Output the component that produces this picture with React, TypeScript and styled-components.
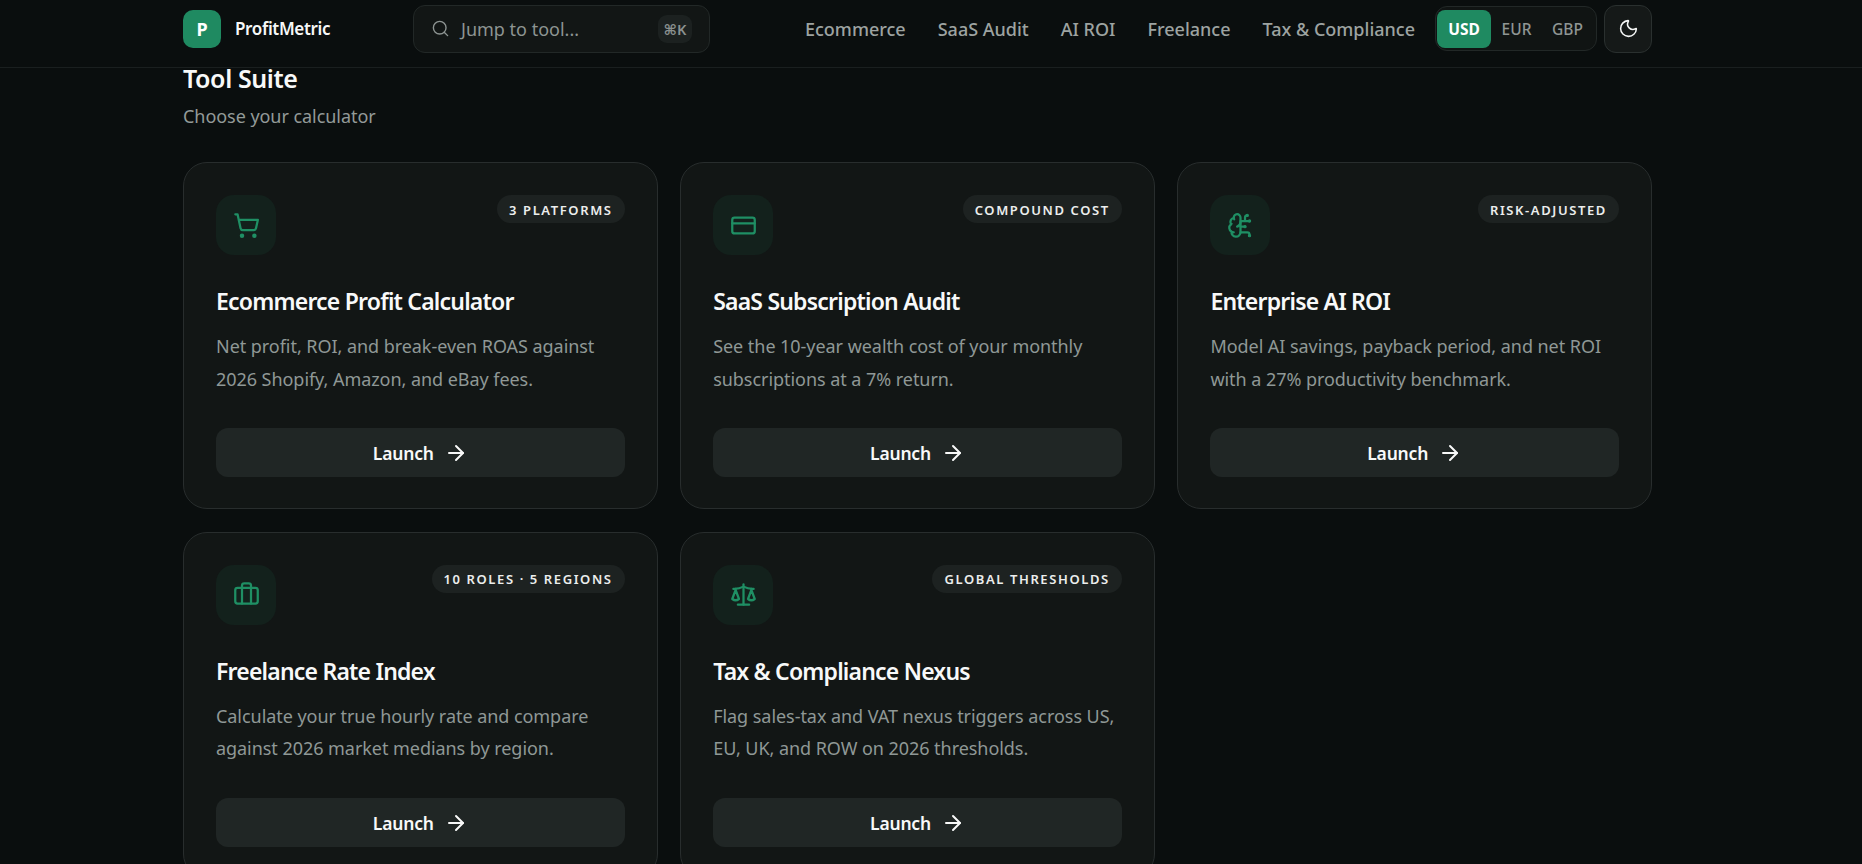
import React from 'react';
import styled, { createGlobalStyle } from 'styled-components';
import { ShoppingCart, CreditCard, BrainCircuit, Briefcase, Scale, ArrowRight, Search, Moon } from 'lucide-react';

const Global = createGlobalStyle`
  html, body { margin: 0; padding: 0; height: 864px; overflow: hidden; background: #0a0e0e; }
  body { font-family: "Noto Sans", "Open Sans", sans-serif; color: #f5f7f6; }
  * { box-sizing: border-box; }
`;

const Page = styled.div`
  height: 864px;
  overflow: hidden;
  background: #0a0e0e;
`;

const Nav = styled.header`
  height: 68px;
  border-bottom: 1px solid #1a1f1f;
  padding: 0 210px 10px 183px;
  display: flex;
  align-items: center;
`;

const Brand = styled.div`
  display: flex;
  align-items: center;
  gap: 14px;
  width: 230px;
`;

const Logo = styled.div`
  width: 38px;
  height: 38px;
  border-radius: 10px;
  background: #1f8a61;
  color: #fff;
  font-weight: 700;
  font-size: 18px;
  display: flex;
  align-items: center;
  justify-content: center;
`;

const BrandName = styled.span`
  font-size: 17px;
  line-height: 20px;
  padding-top: 1px;
  font-weight: 600;
  letter-spacing: -0.35px;
  color: #f7f8f8;
`;

const SearchBox = styled.div`
  width: 297px;
  height: 48px;
  border: 1px solid #222827;
  border-radius: 12px;
  background: #121615;
  display: flex;
  align-items: center;
  padding: 0 17px 0 17px;
  gap: 11px;
  color: #8d9492;
  font-size: 18px;
`;

const SearchText = styled.span`
  flex: 1;
`;

const Kbd = styled.kbd`
  width: 34px;
  height: 28px;
  border-radius: 9px;
  background: #1c2120;
  color: #8b9190;
  font-size: 14.5px;
  font-weight: 600;
  font-family: "Noto Sans", "DejaVu Sans", sans-serif;
  display: flex;
  align-items: center;
  justify-content: center;
`;

const Links = styled.nav`
  margin-left: auto;
  display: flex;
  align-items: center;
  gap: 32px;
`;

const NavLink = styled.a`
  font-size: 18px;
  font-weight: 500;
  color: #9da3a1;
  white-space: nowrap;
`;

const Currency = styled.div`
  margin-left: 20px;
  width: 162px;
  height: 45px;
  border: 1px solid #222827;
  border-radius: 12px;
  background: #101413;
  display: flex;
  align-items: center;
  padding: 0 1px;
`;

const CurrencyOption = styled.button<{ $active?: boolean }>`
  border: 0;
  font-family: inherit;
  height: 38px;
  width: ${p => (p.$active ? '54px' : '51px')};
  padding: 0;
  border-radius: 8px;
  font-size: 15.5px;
  font-weight: ${p => (p.$active ? 700 : 500)};
  color: ${p => (p.$active ? '#fff' : '#8f9694')};
  background: ${p => (p.$active ? '#1f8a61' : 'transparent')};
`;

const ThemeButton = styled.button`
  margin-left: 7px;
  width: 48px;
  height: 48px;
  border: 1px solid #2a302f;
  border-radius: 12px;
  background: #151918;
  color: #f5f7f6;
  display: flex;
  align-items: center;
  justify-content: center;
  padding: 0;
`;

const Main = styled.main`
  padding: 0 210px 0 183px;
`;

const Title = styled.h2`
  margin: -3px 0 0;
  font-size: 25px;
  line-height: 26px;
  font-weight: 600;
  letter-spacing: -0.4px;
  color: #f8f9f9;
`;

const Subtitle = styled.p`
  margin: 11.5px 0 0;
  font-size: 18px;
  line-height: 26px;
  letter-spacing: -0.05px;
  color: #939a98;
`;

const Grid = styled.div`
  margin-top: 33.5px;
  display: grid;
  grid-template-columns: repeat(3, 1fr);
  column-gap: 22.6px;
  row-gap: 23px;
`;

const Card = styled.article`
  height: 346.5px;
  border: 1px solid #282d2d;
  border-radius: 24px;
  background: #121615;
  padding: 32px 32px 0;
  display: flex;
  flex-direction: column;
`;

const CardTop = styled.div`
  display: flex;
  justify-content: space-between;
  align-items: flex-start;
`;

const IconBox = styled.div`
  width: 60px;
  height: 60px;
  border-radius: 18px;
  background: #13211c;
  color: #1f8f64;
  display: flex;
  align-items: center;
  justify-content: center;
`;

const Badge = styled.span`
  height: 28px;
  padding: 1px 12px 0;
  border-radius: 14px;
  background: #1d2221;
  color: #eceeed;
  font-size: 13px;
  font-weight: 600;
  letter-spacing: 1.6px;
  text-transform: uppercase;
  display: flex;
  align-items: center;
  white-space: nowrap;
`;

const CardTitle = styled.h3`
  margin: 29px 0 0;
  font-size: 23px;
  line-height: 34px;
  font-weight: 600;
  letter-spacing: -0.8px;
  color: #f8f9f9;
`;

const CardText = styled.p`
  margin: 12px 0 0;
  font-size: 18px;
  line-height: 32.5px;
  letter-spacing: -0.05px;
  color: #8f9896;
  height: 65px;
`;

const LaunchButton = styled.button`
  margin-top: 33px;
  height: 49px;
  border: 0;
  padding: 1px 0 0;
  border-radius: 12px;
  background: #202625;
  color: #f8f9f9;
  font-family: inherit;
  font-size: 17.5px;
  letter-spacing: -0.2px;
  font-weight: 600;
  display: flex;
  align-items: center;
  justify-content: center;
  gap: 10px;
`;

const tools = [
  { icon: ShoppingCart, badge: '3 Platforms', title: 'Ecommerce Profit Calculator', text: 'Net profit, ROI, and break-even ROAS against 2026 Shopify, Amazon, and eBay fees.' },
  { icon: CreditCard, badge: 'Compound Cost', title: 'SaaS Subscription Audit', text: 'See the 10-year wealth cost of your monthly subscriptions at a 7% return.' },
  { icon: BrainCircuit, badge: 'Risk-Adjusted', title: 'Enterprise AI ROI', text: 'Model AI savings, payback period, and net ROI with a 27% productivity benchmark.' },
  { icon: Briefcase, badge: '10 Roles · 5 Regions', title: 'Freelance Rate Index', text: 'Calculate your true hourly rate and compare against 2026 market medians by region.' },
  { icon: Scale, badge: 'Global Thresholds', title: 'Tax & Compliance Nexus', text: 'Flag sales-tax and VAT nexus triggers across US, EU, UK, and ROW on 2026 thresholds.' },
];

const links = ['Ecommerce', 'SaaS Audit', 'AI ROI', 'Freelance', 'Tax & Compliance'];

export default function App() {
  return (
    <Page>
      <Global />
      <Nav>
        <Brand>
          <Logo>P</Logo>
          <BrandName>ProfitMetric</BrandName>
        </Brand>
        <SearchBox>
          <Search size={19} strokeWidth={1.75} />
          <SearchText>Jump to tool...</SearchText>
          <Kbd>⌘K</Kbd>
        </SearchBox>
        <Links>
          {links.map(l => <NavLink key={l}>{l}</NavLink>)}
        </Links>
        <Currency>
          <CurrencyOption $active>USD</CurrencyOption>
          <CurrencyOption>EUR</CurrencyOption>
          <CurrencyOption>GBP</CurrencyOption>
        </Currency>
        <ThemeButton><Moon size={21} strokeWidth={1.75} /></ThemeButton>
      </Nav>
      <Main>
        <Title>Tool Suite</Title>
        <Subtitle>Choose your calculator</Subtitle>
        <Grid>
          {tools.map(t => (
            <Card key={t.title}>
              <CardTop>
                <IconBox><t.icon size={27} strokeWidth={2} /></IconBox>
                <Badge>{t.badge}</Badge>
              </CardTop>
              <CardTitle>{t.title}</CardTitle>
              <CardText>{t.text}</CardText>
              <LaunchButton>Launch <ArrowRight size={24} strokeWidth={2} /></LaunchButton>
            </Card>
          ))}
        </Grid>
      </Main>
    </Page>
  );
}
